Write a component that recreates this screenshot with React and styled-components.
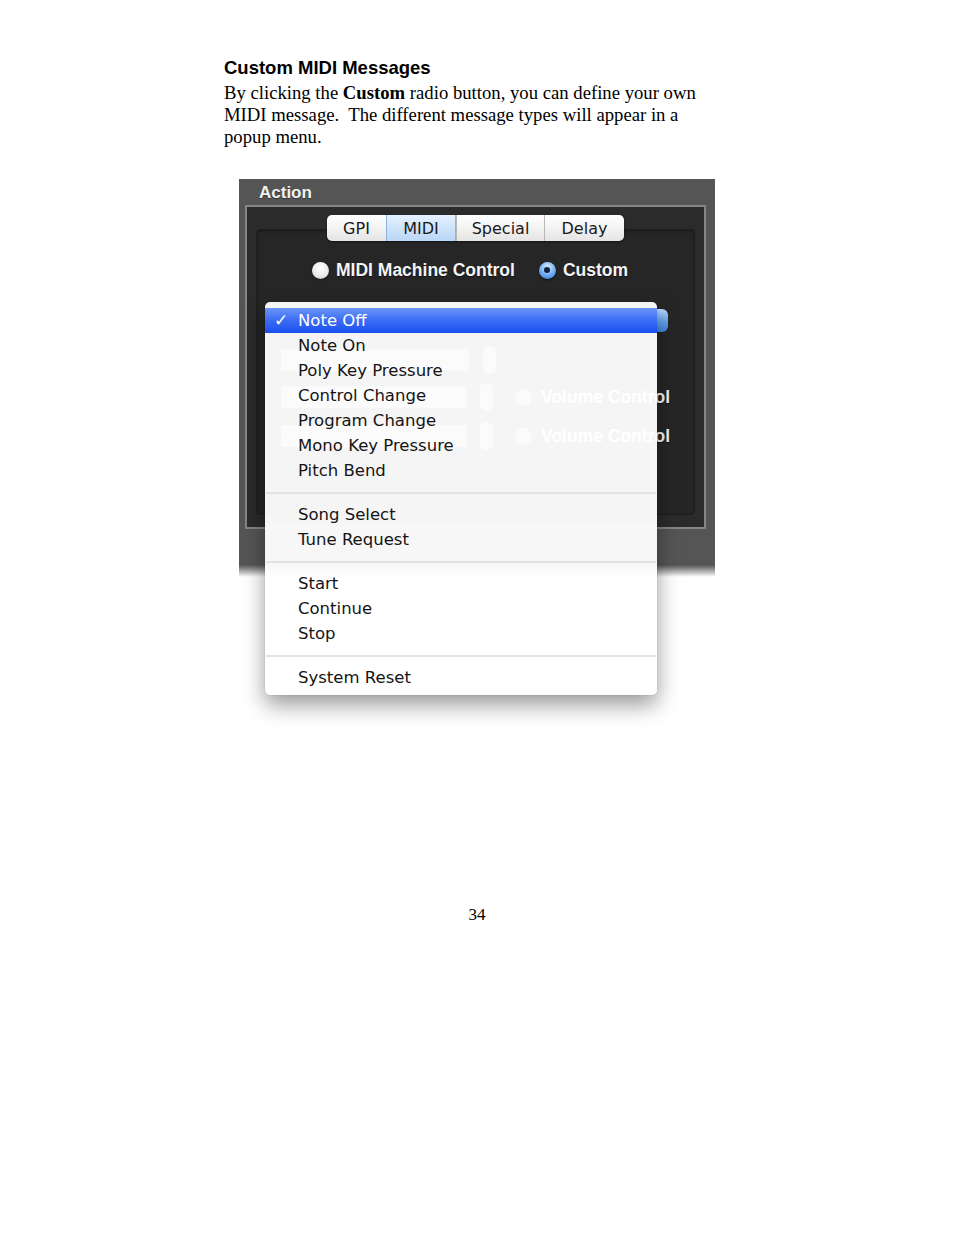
import React from 'react'
import styled, { createGlobalStyle } from 'styled-components'

const GlobalStyle = createGlobalStyle`
  html, body {
    margin: 0;
    padding: 0;
    background: #fff;
  }
`

const Page = styled.div`
  position: relative;
  width: 954px;
  height: 1235px;
  padding: 57px 0 0 224px;
  box-sizing: border-box;
  color: #000;
`

const Heading = styled.h3`
  margin: 0;
  font-family: 'Liberation Sans', Arial, sans-serif;
  font-weight: bold;
  font-size: 18.5px;
  line-height: 21px;
`

const Body = styled.p`
  margin: 4px 0 0;
  width: 482px;
  font-family: 'Liberation Serif', 'Times New Roman', serif;
  font-size: 18.7px;
  line-height: 22px;
  & strong {
    font-weight: bold;
  }
`

const Figure = styled.div`
  position: relative;
  margin: 31px 0 0 15px;
  width: 476px;
`

const Shot = styled.div`
  width: 476px;
  height: 386px;
  background: #555;
  display: flex;
  flex-direction: column;
`

const Fade = styled.div`
  height: 12px;
  background: linear-gradient(#555, rgba(85, 85, 85, 0));
`

const PanelTitle = styled.div`
  height: 26px;
  padding-left: 20px;
  font-family: 'Liberation Sans', Arial, sans-serif;
  font-weight: bold;
  font-size: 17px;
  line-height: 28px;
  color: #f2f2f2;
  text-shadow: 0 1px 1px rgba(0, 0, 0, 0.4);
`

const InnerBox = styled.div`
  margin-left: 6px;
  width: 461px;
  height: 324px;
  box-sizing: border-box;
  border: 2px solid #858585;
  background: #2b2b2b;
  padding: 8px 9px 12px;
  display: flex;
  flex-direction: column;
`

const Tabs = styled.div`
  position: relative;
  z-index: 1;
  align-self: center;
  display: flex;
  height: 26px;
  margin: 0 0 -12px 0;
  border-radius: 5px;
  overflow: hidden;
  background: linear-gradient(#ffffff, #f3f3f3 50%, #e4e4e4);
  box-shadow: 0 1px 2px rgba(0, 0, 0, 0.5);
`

const Tab = styled.div`
  width: ${(p) => p.w}px;
  box-sizing: border-box;
  text-align: center;
  font-family: 'DejaVu Sans', Verdana, sans-serif;
  font-size: 16px;
  line-height: 27px;
  color: #1a1a1a;
  border-left: ${(p) => (p.first ? 'none' : '1px solid #b8b8b8')};
  background: ${(p) =>
    p.active ? 'linear-gradient(#e6f1ff, #cfe4fb 50%, #b9d6f6)' : 'transparent'};
  ${(p) => p.active && 'border-left-color: #8cb4e6; border-right: 1px solid #8cb4e6;'}
`

const TabBox = styled.div`
  flex: 1;
  border-radius: 4px;
  background: #262626;
  border: 1px solid #1e1e1e;
  box-shadow: inset 0 1px 3px rgba(0, 0, 0, 0.45);
  padding: 30px 0 0 0;
  display: flex;
  flex-direction: column;
`

const RadioRow = styled.div`
  display: flex;
  align-items: center;
  height: 20px;
  padding-left: 55px;
`

const Radio = styled.span`
  width: 17px;
  height: 17px;
  border-radius: 50%;
  flex: none;
  box-sizing: border-box;
  display: flex;
  align-items: center;
  justify-content: center;
  margin-left: ${(p) => p.ml || 0}px;
  background: ${(p) =>
    p.dim
      ? '#9a9a9a'
      : p.on
      ? 'radial-gradient(circle at 50% 30%, #d8ecff, #6eaaf0 55%, #2f73d6)'
      : 'radial-gradient(circle at 50% 35%, #ffffff, #e9e9e9 60%, #bdbdbd)'};
  box-shadow: 0 1px 2px rgba(0, 0, 0, 0.6);
  &::after {
    content: '';
    display: ${(p) => (p.on ? 'block' : 'none')};
    width: 6px;
    height: 6px;
    border-radius: 50%;
    background: #102040;
  }
`

const RadioLabel = styled.span`
  margin: 0 24px 0 ${(p) => p.ml || 7}px;
  font-family: 'Liberation Sans', Arial, sans-serif;
  font-weight: bold;
  font-size: 17.5px;
  color: #f4f4f4;
  text-shadow: 0 1px 1px rgba(0, 0, 0, 0.5);
  white-space: nowrap;
`

const PopupButton = styled.div`
  margin: 29px 0 0 13px;
  width: 398px;
  height: 23px;
  border-radius: 6px;
  background: linear-gradient(#b9dcff, #6ea9ec 50%, #3f86de);
`

const GhostRow = styled.div`
  display: flex;
  align-items: center;
  height: 28px;
  margin-top: ${(p) => p.top}px;
  padding-left: 24px;
`

const Field = styled.div`
  width: 188px;
  height: 22px;
  background: #9c9c9c;
`

const Stepper = styled.div`
  width: 13px;
  height: 28px;
  margin-left: 14px;
  border-radius: 6px;
  background: #9c9c9c;
`

const Menu = styled.div`
  position: absolute;
  left: 26px;
  top: 123px;
  width: 392px;
  padding: 6px 0 5px;
  box-sizing: border-box;
  background: rgba(255, 255, 255, 0.955);
  border-radius: 5px;
  box-shadow: 0 10px 22px rgba(0, 0, 0, 0.4), 0 0 1px rgba(0, 0, 0, 0.4);
  z-index: 5;
`

const Item = styled.div`
  position: relative;
  height: 25px;
  padding-left: 33px;
  font-family: 'DejaVu Sans', Verdana, sans-serif;
  font-size: 16.5px;
  line-height: 25px;
  color: ${(p) => (p.selected ? '#fff' : '#141414')};
  background: ${(p) =>
    p.selected ? 'linear-gradient(#6a95f8, #3b6cf4 50%, #1a4ff0)' : 'transparent'};
`

const Check = styled.span`
  position: absolute;
  left: 9px;
  top: 0;
  font-size: 17px;
  font-weight: bold;
`

const Separator = styled.div`
  height: 19px;
  display: flex;
  align-items: center;
  &::before {
    content: '';
    flex: 1;
    height: 2px;
    margin: 0 1px;
    background: #e2e2e2;
  }
`

const PageNumber = styled.div`
  position: absolute;
  left: 0;
  right: 0;
  top: 905px;
  text-align: center;
  font-family: 'Liberation Serif', 'Times New Roman', serif;
  font-size: 17px;
  line-height: 20px;
`

const groups = [
  ['Note Off', 'Note On', 'Poly Key Pressure', 'Control Change', 'Program Change', 'Mono Key Pressure', 'Pitch Bend'],
  ['Song Select', 'Tune Request'],
  ['Start', 'Continue', 'Stop'],
  ['System Reset'],
]

const tabs = [
  { label: 'GPI', w: 59 },
  { label: 'MIDI', w: 70, active: true },
  { label: 'Special', w: 88 },
  { label: 'Delay', w: 80 },
]

export default function App() {
  return (
    <Page>
      <GlobalStyle />
      <Heading>Custom MIDI Messages</Heading>
      <Body>
        By clicking the <strong>Custom</strong> radio button, you can define your own MIDI
        message.&nbsp; The different message types will appear in a popup menu.
      </Body>

      <Figure>
        <Shot>
          <PanelTitle>Action</PanelTitle>
          <InnerBox>
            <Tabs>
              {tabs.map((t, i) => (
                <Tab key={t.label} w={t.w} active={t.active} first={i === 0}>
                  {t.label}
                </Tab>
              ))}
            </Tabs>
            <TabBox>
              <RadioRow>
                <Radio />
                <RadioLabel>MIDI Machine Control</RadioLabel>
                <Radio on />
                <RadioLabel>Custom</RadioLabel>
              </RadioRow>
              <PopupButton />
              <GhostRow top={14}>
                <Field />
                <Stepper />
              </GhostRow>
              <GhostRow top={9}>
                <Field />
                <Stepper />
                <Radio dim ml={22} />
                <RadioLabel ml={9}>Volume Control</RadioLabel>
              </GhostRow>
              <GhostRow top={11}>
                <Field />
                <Stepper />
                <Radio dim ml={22} />
                <RadioLabel ml={9}>Volume Control</RadioLabel>
              </GhostRow>
            </TabBox>
          </InnerBox>
        </Shot>
        <Fade />

        <Menu>
          {groups.map((g, gi) => (
            <React.Fragment key={gi}>
              {gi > 0 && <Separator />}
              {g.map((label) => (
                <Item key={label} selected={label === 'Note Off'}>
                  {label === 'Note Off' && <Check>✓</Check>}
                  {label}
                </Item>
              ))}
            </React.Fragment>
          ))}
        </Menu>
      </Figure>

      <PageNumber>34</PageNumber>
    </Page>
  )
}
